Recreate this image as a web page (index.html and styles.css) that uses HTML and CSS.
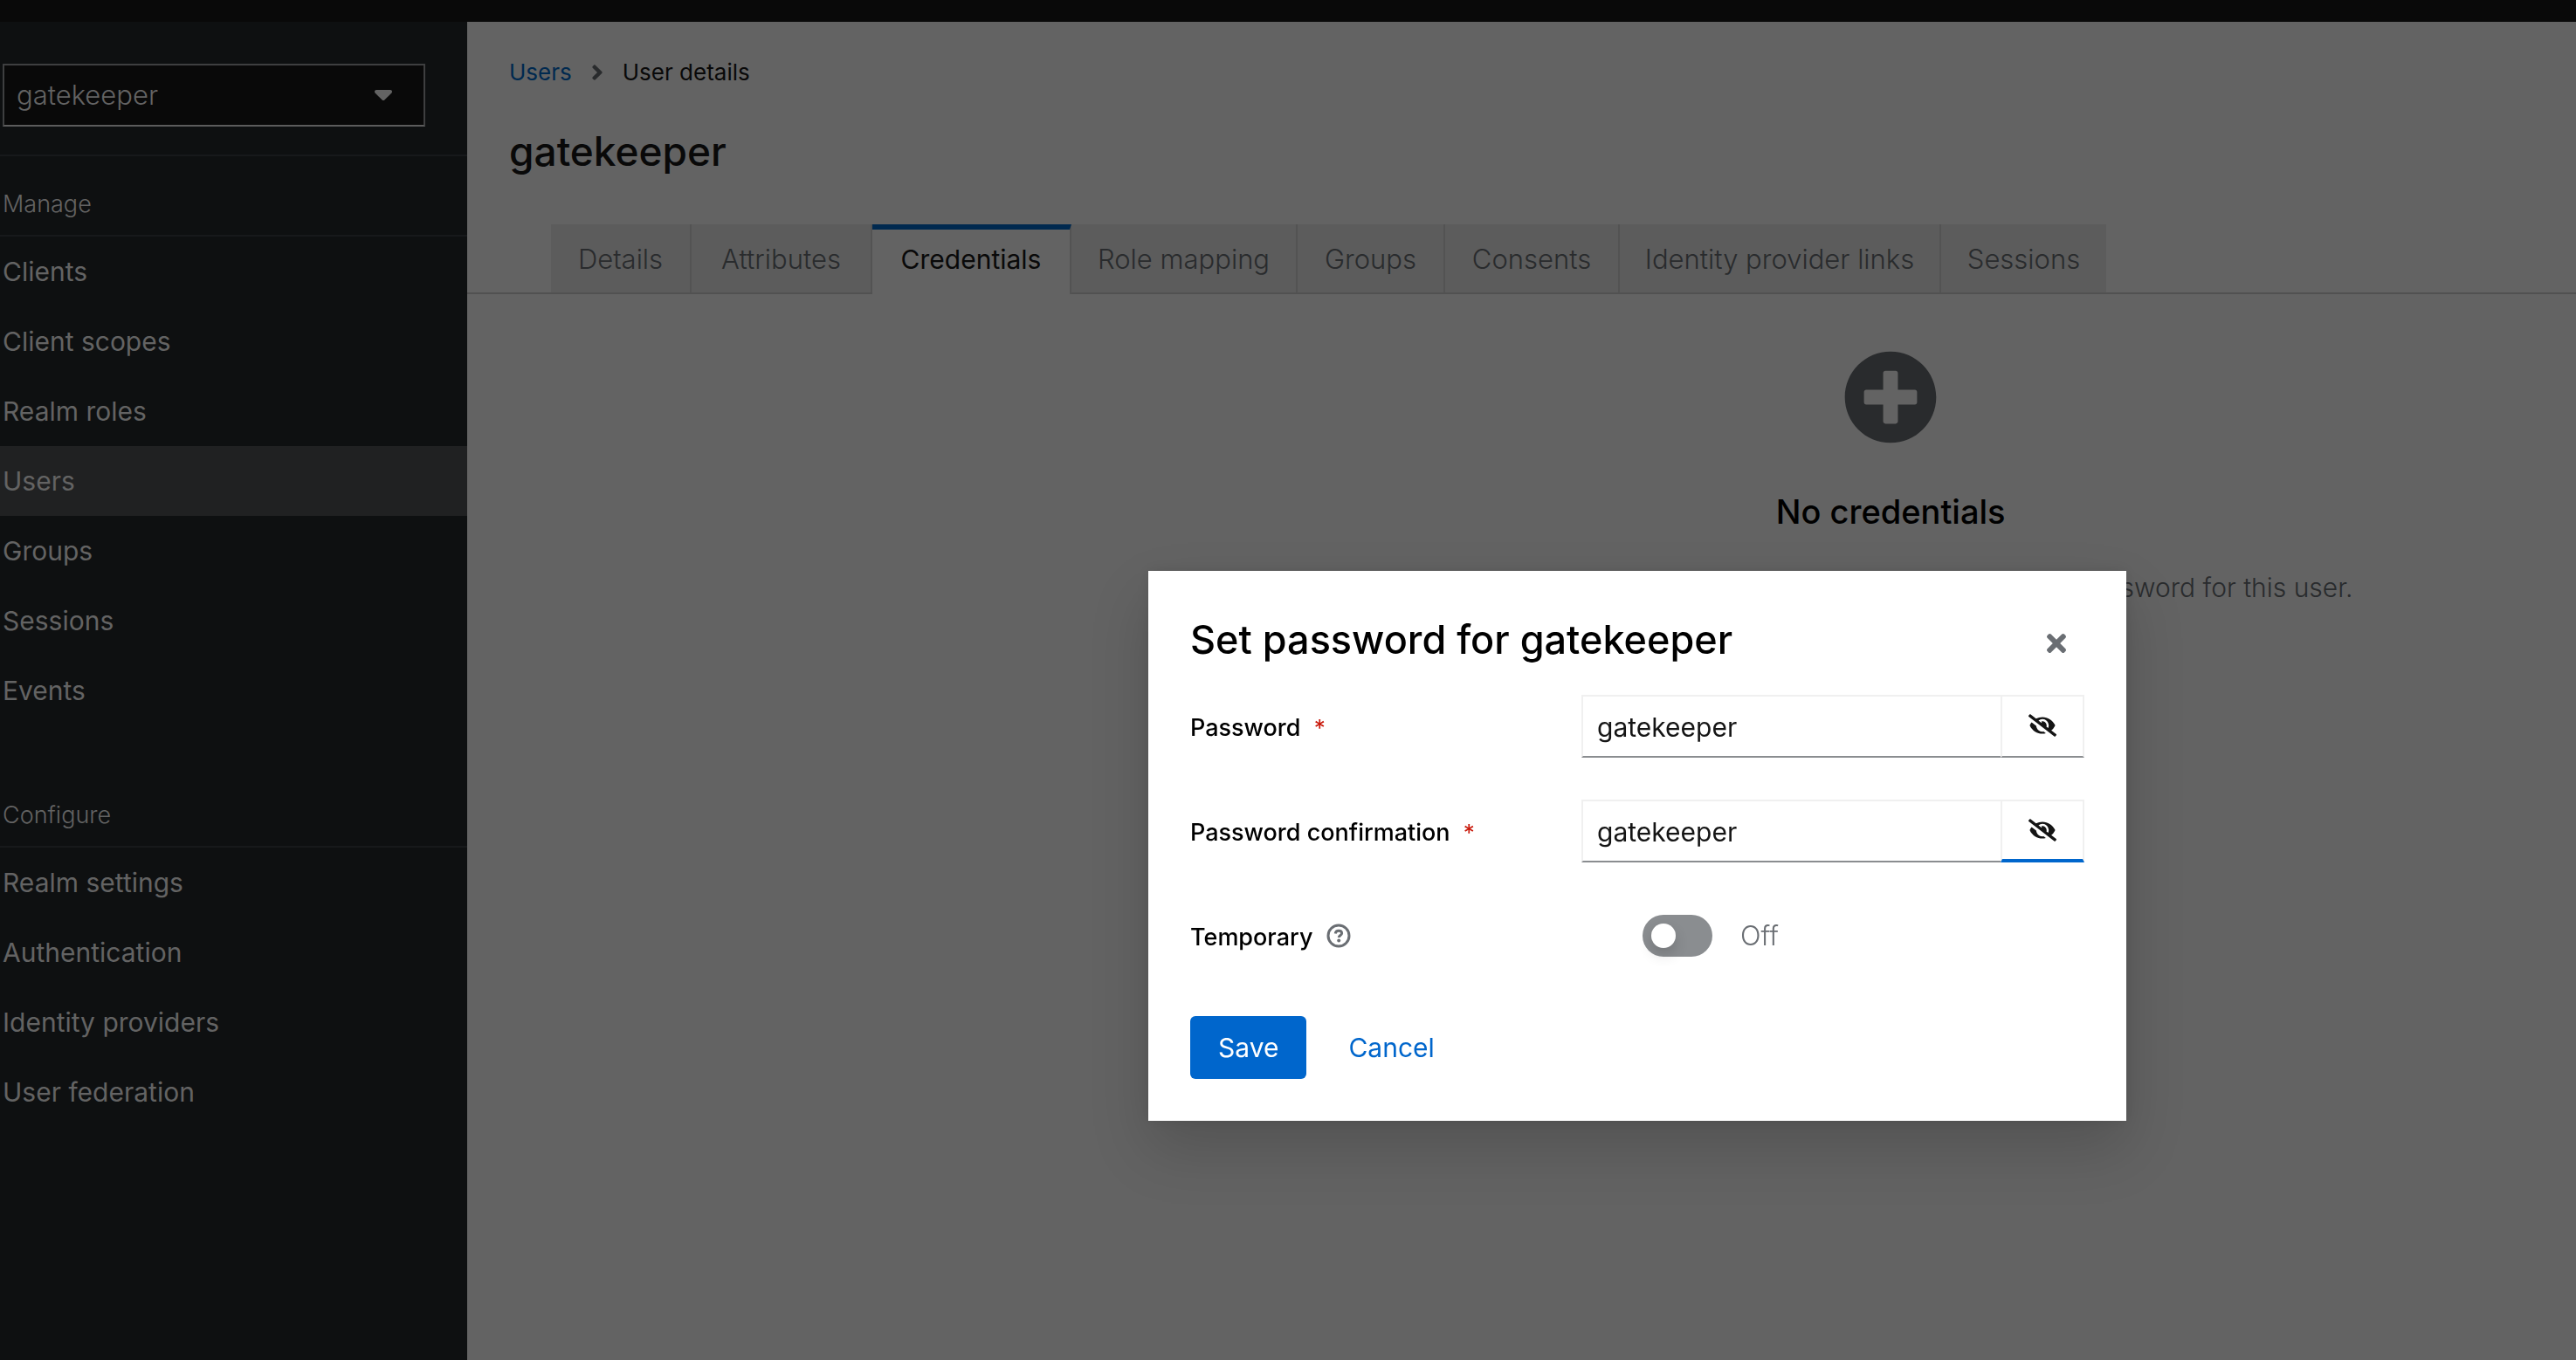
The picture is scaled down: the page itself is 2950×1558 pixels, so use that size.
FILE: index.html
```html
<!DOCTYPE html>
<html lang="en">
<head>
<meta charset="utf-8">
<meta name="viewport" content="width=device-width, initial-scale=1">
<title>User details</title>
<link rel="stylesheet" href="styles.css">
</head>
<body>
<div class="page">
  <header class="masthead"></header>
  <div class="body">
    <aside class="sidebar">
      <div class="realm">
        <button class="realm-toggle" type="button" aria-haspopup="listbox">
          <span>gatekeeper</span>
          <svg class="caret" viewBox="0 0 320 192" aria-hidden="true"><path d="M31 0h258c28 0 42 34 22 54L182 183c-12 12-32 12-44 0L9 54C-11 34 3 0 31 0z"/></svg>
        </button>
      </div>
      <nav class="nav" aria-label="Manage">
        <h2 class="nav-title">Manage</h2>
        <ul class="nav-list">
          <li><a class="nav-link" href="#">Clients</a></li>
          <li><a class="nav-link" href="#">Client scopes</a></li>
          <li><a class="nav-link" href="#">Realm roles</a></li>
          <li><a class="nav-link current" href="#" aria-current="page">Users</a></li>
          <li><a class="nav-link" href="#">Groups</a></li>
          <li><a class="nav-link" href="#">Sessions</a></li>
          <li><a class="nav-link" href="#">Events</a></li>
        </ul>
      </nav>
      <nav class="nav" aria-label="Configure">
        <h2 class="nav-title">Configure</h2>
        <ul class="nav-list">
          <li><a class="nav-link" href="#">Realm settings</a></li>
          <li><a class="nav-link" href="#">Authentication</a></li>
          <li><a class="nav-link" href="#">Identity providers</a></li>
          <li><a class="nav-link" href="#">User federation</a></li>
        </ul>
      </nav>
    </aside>
    <main class="main">
      <nav class="breadcrumb" aria-label="Breadcrumb">
        <a href="#">Users</a>
        <svg class="chevron" viewBox="0 0 256 512" aria-hidden="true"><path d="M224.300 273l-136 136c-9.400 9.400-24.600 9.400-33.900 0l-22.600-22.600c-9.400-9.400-9.400-24.600 0-33.900l96.400-96.400-96.400-96.400c-9.400-9.400-9.400-24.600 0-33.900L54.300 103c9.400-9.400 24.600-9.400 33.900 0l136 136c9.500 9.400 9.500 24.600.1 34z"/></svg>
        <span>User details</span>
      </nav>
      <h1 class="title">gatekeeper</h1>
      <div class="tabs" role="tablist">
        <button class="tab" role="tab" type="button">Details</button>
        <button class="tab" role="tab" type="button">Attributes</button>
        <button class="tab active" role="tab" type="button" aria-selected="true">Credentials</button>
        <button class="tab" role="tab" type="button">Role mapping</button>
        <button class="tab" role="tab" type="button">Groups</button>
        <button class="tab" role="tab" type="button">Consents</button>
        <button class="tab" role="tab" type="button">Identity provider links</button>
        <button class="tab" role="tab" type="button">Sessions</button>
      </div>
      <section class="empty">
        <svg class="empty-icon" viewBox="0 0 512 512" aria-hidden="true"><path d="M256 8C119 8 8 119 8 256s111 248 248 248 248-111 248-248S393 8 256 8zm144 276c0 6.600-5.400 12-12 12h-92v92c0 6.600-5.400 12-12 12h-56c-6.600 0-12-5.400-12-12v-92h-92c-6.600 0-12-5.400-12-12v-56c0-6.600 5.400-12 12-12h92v-92c0-6.600 5.400-12 12-12h56c6.600 0 12 5.400 12 12v92h92c6.600 0 12 5.400 12 12v56z"/></svg>
        <h2 class="empty-title">No credentials</h2>
        <p class="empty-text">This user does not have any credentials. You can set password for this user.</p>
      </section>
    </main>
  </div>
</div>

<div class="backdrop">
  <div class="modal" role="dialog" aria-modal="true" aria-labelledby="modal-title">
    <header class="modal-head">
      <h1 class="modal-title" id="modal-title">Set password for gatekeeper</h1>
      <button class="close" type="button" aria-label="Close">
        <svg viewBox="0 0 352 512" aria-hidden="true"><path d="M242.720 256l100.070-100.070c12.280-12.280 12.280-32.190 0-44.480l-22.240-22.240c-12.280-12.280-32.190-12.280-44.480 0L176 189.280 75.930 89.210c-12.280-12.280-32.190-12.280-44.480 0L9.210 111.450c-12.280 12.280-12.280 32.190 0 44.480L109.280 256 9.210 356.070c-12.280 12.280-12.280 32.190 0 44.480l22.240 22.240c12.280 12.280 32.200 12.280 44.480 0L176 322.720l100.070 100.070c12.280 12.280 32.200 12.280 44.480 0l22.240-22.240c12.280-12.280 12.280-32.190 0-44.480L242.720 256z"/></svg>
      </button>
    </header>
    <form class="form">
      <div class="row">
        <label class="label" for="password">Password <span class="required">*</span></label>
        <div class="input-group">
          <input class="input" id="password" type="text" value="gatekeeper">
          <button class="reveal" type="button" aria-label="Hide password">
            <svg viewBox="0 0 640 512" aria-hidden="true"><path d="M320 400c-75.850 0-137.250-58.710-142.900-133.110L72.200 185.820c-13.790 17.300-26.480 35.590-36.720 55.590a32.350 32.350 0 0 0 0 29.190C89.710 376.410 197.070 448 320 448c26.910 0 52.870-4 77.890-10.460L346 397.390a144.130 144.130 0 0 1-26 2.610zm313.820 58.100l-110.550-85.440a331.250 331.250 0 0 0 81.250-102.070 32.350 32.350 0 0 0 0-29.190C550.290 135.590 442.930 64 320 64a308.150 308.150 0 0 0-147.320 37.700L45.460 3.370A16 16 0 0 0 23 6.180L3.370 31.450A16 16 0 0 0 6.180 53.900l588.360 454.730a16 16 0 0 0 22.460-2.810l19.640-25.270a16 16 0 0 0-2.820-22.450zm-183.720-142l-39.300-30.380A94.750 94.750 0 0 0 416 256a94.760 94.760 0 0 0-121.310-92.210A47.650 47.650 0 0 1 304 192a46.640 46.640 0 0 1-1.540 10l-73.610-56.890A142.310 142.310 0 0 1 320 112a143.920 143.920 0 0 1 144 144c0 21.630-5.290 41.790-13.900 60.110z"/></svg>
          </button>
        </div>
      </div>
      <div class="row">
        <label class="label" for="confirmation">Password confirmation <span class="required">*</span></label>
        <div class="input-group">
          <input class="input" id="confirmation" type="text" value="gatekeeper">
          <button class="reveal focused" type="button" aria-label="Hide password confirmation">
            <svg viewBox="0 0 640 512" aria-hidden="true"><path d="M320 400c-75.850 0-137.250-58.710-142.900-133.110L72.200 185.820c-13.790 17.300-26.480 35.590-36.720 55.590a32.350 32.350 0 0 0 0 29.190C89.710 376.410 197.070 448 320 448c26.910 0 52.870-4 77.890-10.460L346 397.390a144.130 144.130 0 0 1-26 2.610zm313.820 58.100l-110.550-85.440a331.250 331.250 0 0 0 81.250-102.070 32.350 32.350 0 0 0 0-29.190C550.290 135.590 442.930 64 320 64a308.150 308.150 0 0 0-147.320 37.700L45.460 3.370A16 16 0 0 0 23 6.180L3.370 31.450A16 16 0 0 0 6.180 53.900l588.360 454.730a16 16 0 0 0 22.460-2.810l19.640-25.270a16 16 0 0 0-2.820-22.450zm-183.720-142l-39.300-30.380A94.750 94.750 0 0 0 416 256a94.760 94.760 0 0 0-121.310-92.210A47.650 47.650 0 0 1 304 192a46.640 46.640 0 0 1-1.540 10l-73.610-56.890A142.310 142.310 0 0 1 320 112a143.920 143.920 0 0 1 144 144c0 21.630-5.290 41.790-13.900 60.110z"/></svg>
          </button>
        </div>
      </div>
      <div class="row">
        <div class="label-group">
          <label class="label" for="temporary">Temporary</label>
          <button class="help" type="button" aria-label="Help for Temporary">
            <svg viewBox="0 0 28 28" aria-hidden="true"><circle cx="14" cy="14" r="12" fill="none" stroke="currentColor" stroke-width="3"/><path d="M10.200 11.500c.4-2.200 1.800-3.200 3.800-3.200 2 0 3.600 1.100 3.600 2.900 0 2.300-3.300 2.400-3.300 4.700" fill="none" stroke="currentColor" stroke-width="3"/><circle cx="14.200" cy="19.500" r="2" fill="currentColor"/></svg>
          </button>
        </div>
        <div class="switch">
          <input class="switch-input" id="temporary" type="checkbox" role="switch">
          <span class="switch-text">Off</span>
        </div>
      </div>
      <div class="actions">
        <button class="btn primary" type="button">Save</button>
        <button class="btn link" type="button">Cancel</button>
      </div>
    </form>
  </div>
</div>
</body>
</html>
```
FILE: styles.css
```css
* {
  box-sizing: border-box;
}

body {
  margin: 0;
  background: #636363;
  color: #090909;
  font-family: Inter, "Liberation Sans", sans-serif;
  font-size: 30px;
  line-height: 48px;
}

h1, h2, p, ul {
  margin: 0;
  padding: 0;
  font-weight: 400;
}

ul {
  list-style: none;
}

a {
  text-decoration: none;
}

button, input {
  margin: 0;
  padding: 0;
  border: 0;
  border-radius: 0;
  background: none;
  color: inherit;
  font: inherit;
}

svg {
  display: block;
  fill: currentColor;
}

.page {
  display: flex;
  flex-direction: column;
  min-height: 100vh;
  overflow: hidden;
}

.masthead {
  height: 25px;
  background: #090909;
}

.body {
  display: flex;
  flex: 1;
}

/* Sidebar */

.sidebar {
  flex: 0 0 535px;
  background: #0e1011;
  color: #636363;
  font-weight: 300;
}

.realm {
  padding: 48px 48px 32px 3px;
  border-bottom: 2px solid #17191b;
}

.realm-toggle {
  display: flex;
  align-items: center;
  justify-content: space-between;
  width: 100%;
  height: 72px;
  padding: 0 36px 0 14px;
  border: 2px solid #3e3f40;
  border-bottom-color: #5c5c5c;
  background: #090909;
  font-size: 31px;
  font-weight: 300;
}

.caret {
  width: 20px;
  height: 12px;
}

.nav {
  margin-bottom: 48px;
}

.nav-title {
  padding: 34px 0 14px 3px;
  height: 92px;
  border-bottom: 2px solid #17191b;
  font-size: 27px;
  line-height: 42px;
  font-weight: 300;
}

.nav-link {
  display: block;
  padding: 16px 3px;
  color: inherit;
}

.nav-link.current {
  background: #202122;
}

/* Main column */

.main {
  flex: 1;
  min-width: 0;
}

.breadcrumb {
  display: flex;
  align-items: center;
  padding: 37px 48px 0;
  font-size: 26px;
  line-height: 42px;
}

.breadcrumb a {
  color: #00294f;
}

.chevron {
  width: 14px;
  height: 28px;
  margin: 0 22px;
  color: #292b2d;
}

.title {
  padding: 38px 48px 52px;
  font-size: 46px;
  line-height: 63px;
  font-weight: 500;
}

.tabs {
  display: grid;
  grid-template-columns: 161px 207px 228px 259px 169px 200px 368px 189px;
  grid-template-rows: 78px;
  padding-left: 96px;
  height: 80px;
  border-bottom: 2px solid #515151;
}

.tab {
  padding-top: 2px;
  border-right: 2px solid #535353;
  background: #5c5c5c;
  color: #292b2d;
  font-size: 31px;
  font-weight: 300;
  white-space: nowrap;
}

.tab:last-child {
  border-right: 0;
}

.tab.active {
  height: 80px;
  padding: 0 0 6px;
  border-top: 6px solid #00294f;
  background: #636363;
  color: #090909;
  font-size: 30px;
  font-weight: 400;
}

.empty {
  display: flex;
  flex-direction: column;
  align-items: center;
  margin-left: 35%;
  padding-top: 64px;
  white-space: nowrap;
}

.empty-icon {
  width: 108px;
  height: 108px;
  color: #292b2d;
}

.empty-title {
  margin-top: 47px;
  color: #000;
  font-size: 38px;
  line-height: 60px;
  font-weight: 500;
}

.empty-text {
  margin-top: 33px;
  color: #292b2d;
  font-weight: 300;
}

/* Modal */

.backdrop {
  position: fixed;
  inset: 0;
  display: grid;
  place-items: center;
  padding: 380px 0 0 800px;
}

.modal {
  width: 1120px;
  padding: 48px;
  background: #fff;
  color: #151515;
  box-shadow: 0 32px 64px rgba(3, 3, 3, 0.16), 0 0 16px rgba(3, 3, 3, 0.1);
}

.modal-head {
  display: flex;
  align-items: center;
  justify-content: space-between;
  margin-bottom: 32px;
}

.modal-title {
  color: #000;
  font-size: 45px;
  line-height: 62px;
  font-weight: 500;
}

.close {
  display: grid;
  place-items: center;
  width: 64px;
  height: 62px;
  padding-top: 8px;
  color: #6a6e73;
}

.close svg {
  width: 22px;
  height: 32px;
}

.form {
  display: flex;
  flex-direction: column;
  gap: 48px;
}

.row {
  display: grid;
  grid-template-columns: 448px minmax(0, 1fr);
  align-items: center;
  height: 72px;
}

.label {
  padding-top: 3px;
  color: #000;
  font-size: 27px;
  font-weight: 500;
}

.required {
  margin-left: 8px;
  color: #c9190b;
  font-size: 26px;
  font-weight: 400;
}

.label-group {
  display: flex;
  align-items: center;
  gap: 16px;
}

.help {
  color: #6a6e73;
}

.help svg {
  width: 28px;
  height: 28px;
}

.input-group {
  display: flex;
  height: 72px;
}

.input {
  flex: 1;
  min-width: 0;
  padding: 2px 16px 0;
  border: 2px solid #f0f0f0;
  border-bottom-color: #8a8d90;
  border-right: 0;
}

.reveal {
  display: grid;
  place-items: center;
  width: 96px;
  padding-bottom: 2px;
  border: 2px solid #f0f0f0;
  border-bottom-color: #8a8d90;
}

.reveal.focused {
  padding-bottom: 0;
  border-bottom: 4px solid #06c;
}

.reveal svg {
  width: 32px;
  height: 26px;
}

.switch {
  display: flex;
  align-items: center;
  gap: 32px;
  padding-left: 70px;
  color: #6a6e73;
  font-size: 31px;
  font-weight: 300;
}

.switch-input {
  appearance: none;
  display: flex;
  align-items: center;
  width: 80px;
  height: 48px;
  padding-left: 10px;
  border-radius: 24px;
  background: #8a8d90;
}

.switch-input::before {
  content: "";
  width: 28px;
  height: 28px;
  border-radius: 14px;
  background: #fff;
  box-shadow: 0 8px 16px rgba(3, 3, 3, 0.16);
}

.actions {
  display: flex;
  gap: 16px;
  padding-top: 8px;
}

.btn {
  height: 72px;
  padding: 0 32px;
  border-radius: 6px;
  font-size: 30px;
  font-weight: 400;
}

.btn.primary {
  background: #06c;
  color: #fff;
}

.btn.link {
  color: #06c;
}
```
